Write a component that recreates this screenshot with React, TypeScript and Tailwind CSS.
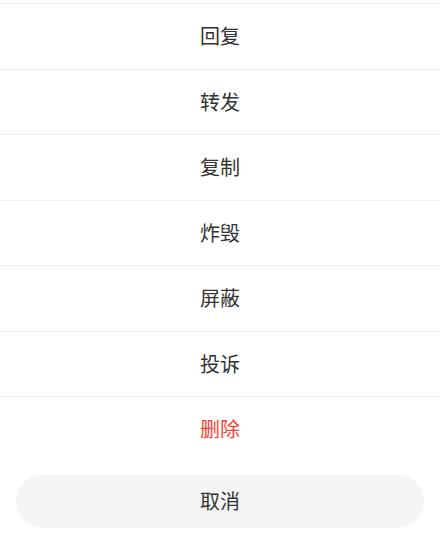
const actions = [
  { label: '回复' },
  { label: '转发' },
  { label: '复制' },
  { label: '炸毁' },
  { label: '屏蔽' },
  { label: '投诉' },
  { label: '删除', danger: true },
]

export default function App() {
  return (
    <div
      className="w-[440px] h-[539px] bg-white pt-[3px]"
      style={{ fontFamily: '"Noto Sans CJK SC", "Noto Sans", sans-serif' }}
    >
      {/* Action list */}
      <div>
        {actions.map((action) => (
          <div
            key={action.label}
            className={`h-[65.5px] border-t border-[#f0f0f0] flex items-center justify-center text-[20px] ${
              action.danger ? 'text-[#f5432f]' : 'text-[#333333]'
            }`}
          >
            {action.label}
          </div>
        ))}
      </div>

      {/* Cancel */}
      <div className="px-4 mt-[12.5px]">
        <div className="h-[54px] rounded-full bg-[#f5f5f5] flex items-center justify-center text-[20px] text-[#333333]">
          取消
        </div>
      </div>
    </div>
  )
}
